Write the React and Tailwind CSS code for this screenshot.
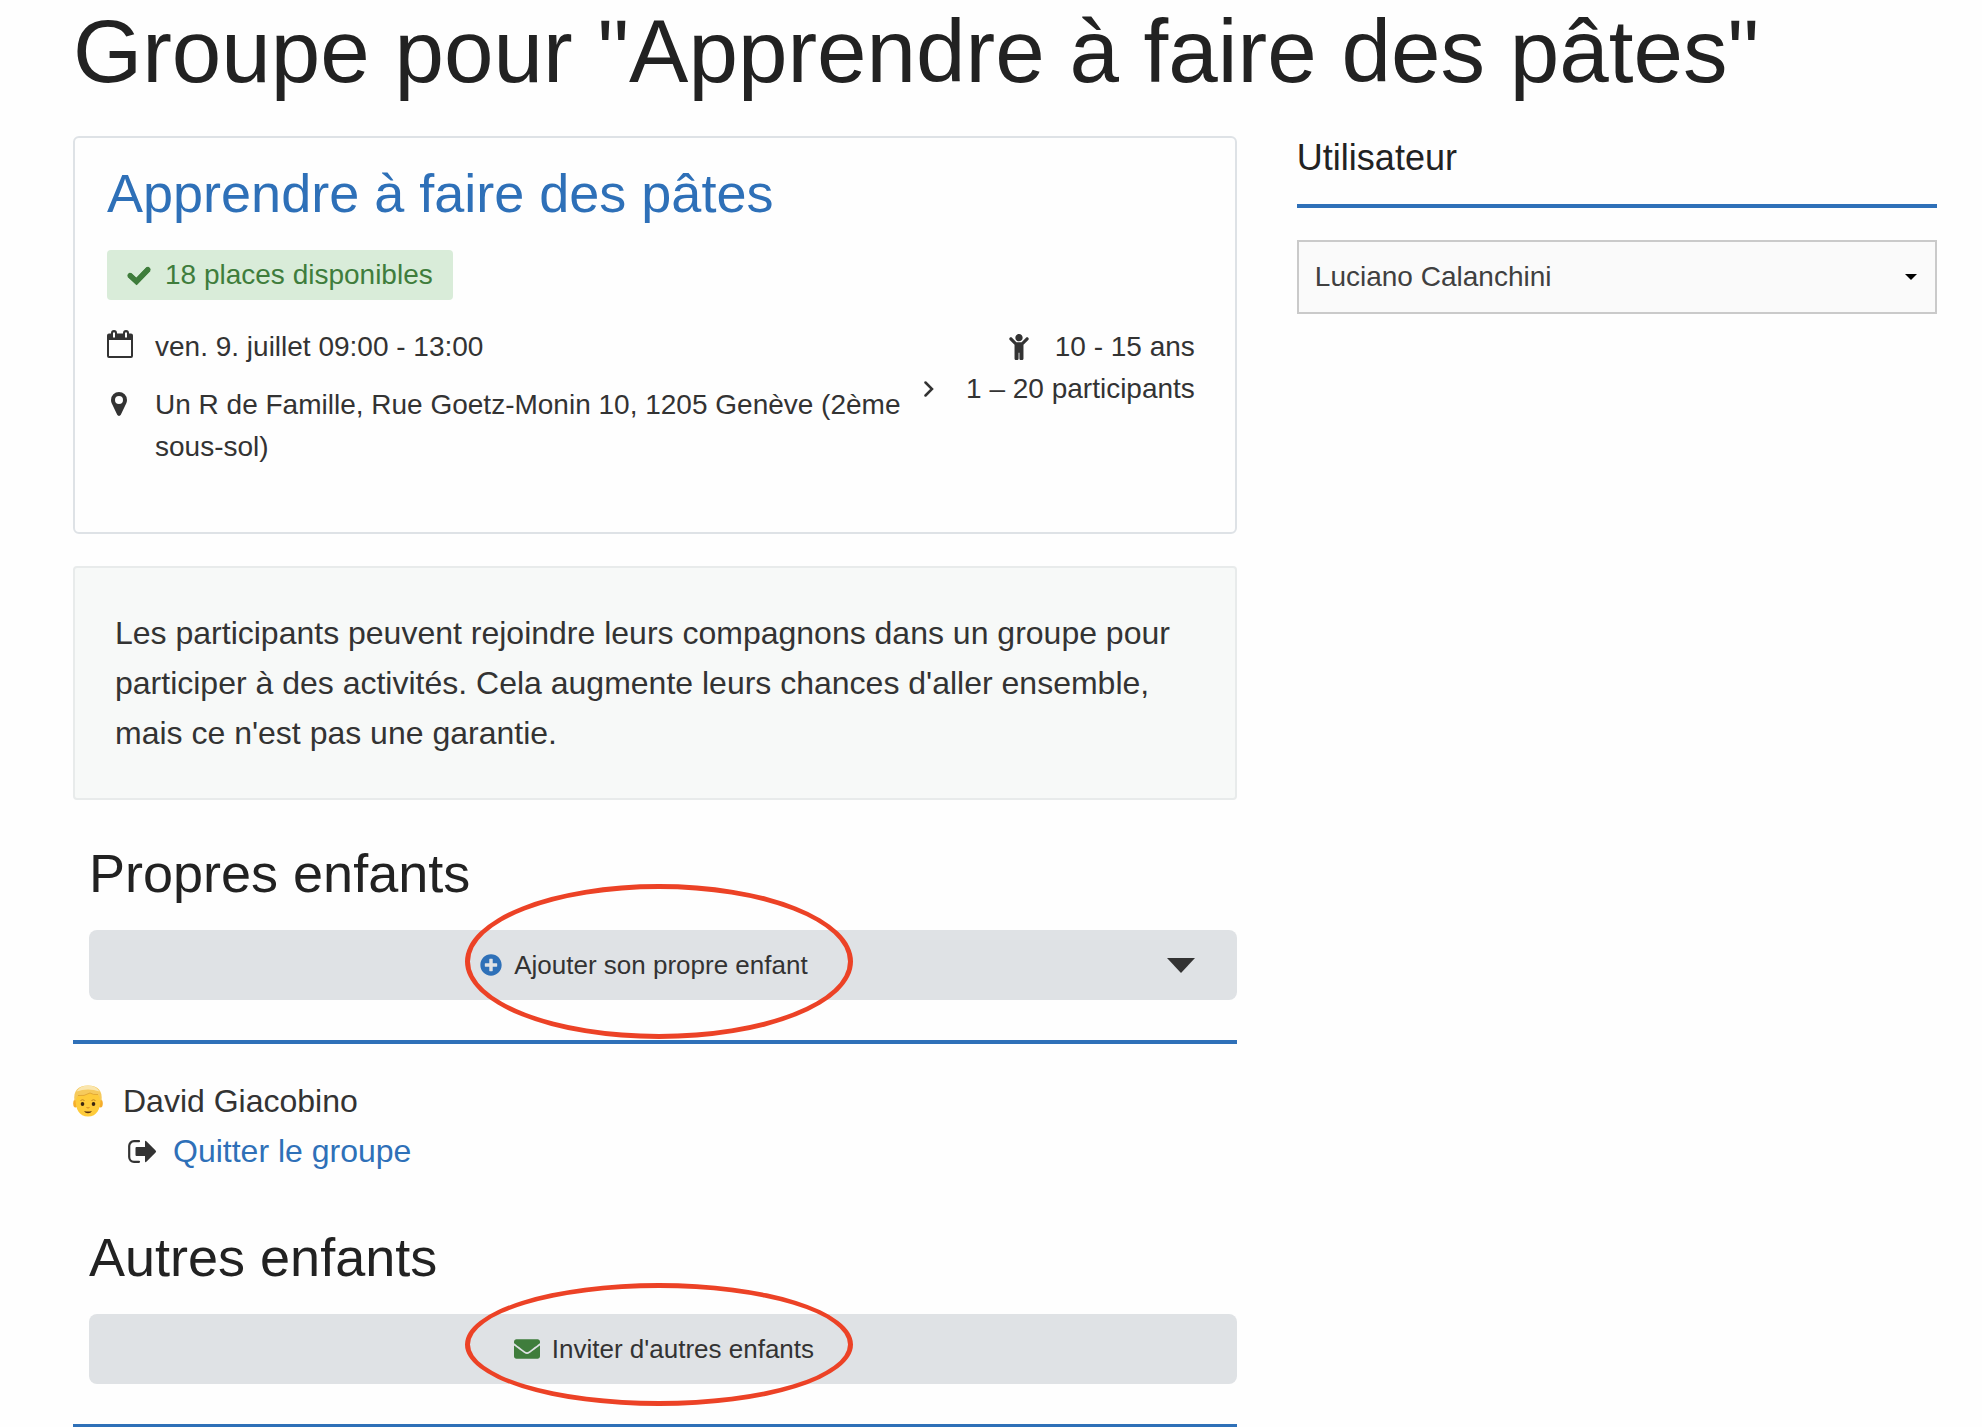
import React, { useState } from 'react';
import { FaChild, FaEnvelope, FaPlusCircle } from 'react-icons/fa';

const CheckIcon = () => (
    <svg className="w-6 h-6" viewBox="0 0 24 24" aria-hidden="true">
        <path d="M2.500 12 9.500 18.500 21.500 6" fill="none" stroke="currentColor" strokeWidth="5.500" />
        <path d="M3 12.500 9.500 18.500 21 6.500" fill="none" stroke="currentColor" strokeWidth="5" strokeLinecap="round" />
    </svg>
);

const CalendarIcon = () => (
    <svg className="w-[26px] h-[28px]" viewBox="0 0 26 28" aria-hidden="true">
        <path
            fill="currentColor"
            fillRule="evenodd"
            d="M2 3.500h2V3a3 3 0 0 1 6 0v.5h6V3a3 3 0 0 1 6 0v.5h2a2 2 0 0 1 2 2V26a2 2 0 0 1-2 2H2a2 2 0 0 1-2-2V5.500a2 2 0 0 1 2-2zM2 10v16h22V10zM6 2.500v5h2v-5zM18 2.500v5h2v-5z"
        />
    </svg>
);

const MarkerIcon = () => (
    <svg className="w-4 h-6" viewBox="0 0 16 24" aria-hidden="true">
        <path
            fill="currentColor"
            fillRule="evenodd"
            d="M8 0a8 8 0 0 1 8 8c0 1.200-.3 2.300-.7 3.200L9.800 22.800a2 2 0 0 1-3.600 0L.7 11.200C.3 10.300 0 9.200 0 8a8 8 0 0 1 8-8zm0 4a4 4 0 1 0 0 8 4 4 0 0 0 0-8z"
        />
    </svg>
);

const LeaveIcon = () => (
    <svg className="w-[29px] h-[23px]" viewBox="0 0 29 23" aria-hidden="true">
        <path d="M11 1.200H6A4.800 4.800 0 0 0 1.200 6v11A4.800 4.800 0 0 0 6 21.800h5" fill="none" stroke="currentColor" strokeWidth="2.200" strokeLinecap="round" />
        <path d="M8.500 7H17V2q0-2 1.600-.6l9 9q1 1.100 0 2.200l-9 9Q17 23 17 21v-5H8.500Q7.500 16 7.500 15V8q0-1 1-1z" fill="currentColor" />
    </svg>
);

const BoyIcon = () => (
    <svg className="w-[30px] h-8" viewBox="0 0 30 32" aria-hidden="true">
        <ellipse cx="2.500" cy="18.500" rx="2.300" ry="4" fill="#f5ad2b" />
        <ellipse cx="27.500" cy="18.500" rx="2.300" ry="4" fill="#f5ad2b" />
        <path d="M2.500 14C2.500 5 8 2 15 2s12.500 3 12.500 12c0 10-3.500 17.500-12.500 17.500S2.500 24 2.500 14z" fill="#fecb3a" />
        <path d="M1.500 16C0 6 5 .5 15 .5S30 6 28.500 16l-1.500-1q-.5-4-2-5.500Q20 10 17 8 11 11.500 5 10.500 3.500 12 3 15z" fill="#f6ca5c" />
        <path d="M3.500 6.500Q7 .5 15 .5t11.500 6Q15 2.500 3.500 6.500z" fill="#fae6ae" />
        <path d="M5 10.500q6 1 12-2.500 3 2 8 1.500" fill="none" stroke="#d99a2b" strokeWidth=".7" />
        <path d="M7.500 15.500q2-1.500 4 0M18.500 15.500q2-1.500 4 0" fill="none" stroke="#b87922" strokeWidth=".8" />
        <ellipse cx="9.500" cy="19" rx="1.800" ry="2" fill="#3d2711" />
        <ellipse cx="20.500" cy="19" rx="1.800" ry="2" fill="#3d2711" />
        <path d="M13.500 22.500q1.500 1 3 0" fill="none" stroke="#d78a1e" />
        <path d="M11 26q4 1 8 0-1.200 2.200-4 2.200T11 26z" fill="#5b3110" />
    </svg>
);

// oval drawn over a button to point it out
const Highlight = ({ className }) => (
    <span className={`absolute left-[376px] w-[388px] rounded-[50%] border-[5px] border-[#ec4226] pointer-events-none ${className}`}></span>
);

const App = () => {
    const [user, setUser] = useState('Luciano Calanchini');

    return (
        <div className="min-h-screen bg-[#fefefe] pl-[73px] pr-[45px] text-[#333] font-['Liberation_Sans',Arial,sans-serif]">
            <h1 className="pt-px text-[89px] leading-[100px] text-[#222]">Groupe pour "Apprendre à faire des pâtes"</h1>

            <div className="mt-[35px] grid grid-cols-[20fr_11fr] items-start gap-[60px]">
                <main>
                    {/* Activity */}
                    <section className="rounded-md border-2 border-[#dee2e6] px-8 pt-5 pb-[64px] text-[28px] leading-[42px]">
                        <h2 className="text-[54px] leading-[70px]">
                            <a href="#activite" className="text-[#2e70b8]">Apprendre à faire des pâtes</a>
                        </h2>
                        <div className="mt-[22px] flex h-[50px] w-fit items-center gap-[14px] rounded-sm bg-[#d9ecd9] px-5 text-[#3f7d3c]">
                            <CheckIcon />
                            <span>18 places disponibles</span>
                        </div>
                        <div className="mt-[26px] flex justify-between pr-2">
                            <div className="flex w-[800px] shrink flex-col gap-4">
                                <div className="flex">
                                    <span className="w-12 shrink-0 pt-1"><CalendarIcon /></span>
                                    <span>ven. 9. juillet 09:00 - 13:00</span>
                                </div>
                                <div className="flex">
                                    <span className="w-12 shrink-0 pl-1 pt-2"><MarkerIcon /></span>
                                    <span>Un R de Famille, Rue Goetz-Monin 10, 1205 Genève (2ème sous-sol)</span>
                                </div>
                            </div>
                            <div className="flex shrink-0 flex-col items-end">
                                <div className="flex items-center gap-6">
                                    <FaChild className="h-[26px] w-[24px]" />
                                    <span>10 - 15 ans</span>
                                </div>
                                <div className="flex items-center gap-8">
                                    <svg className="h-4 w-[10px]" viewBox="0 0 10 16" aria-hidden="true">
                                        <path d="M1.500 1.500 8 8l-6.500 6.500" fill="none" stroke="currentColor" strokeWidth="2.500" strokeLinecap="round" />
                                    </svg>
                                    <span>1 – 20 participants</span>
                                </div>
                            </div>
                        </div>
                    </section>

                    {/* Intro */}
                    <p className="mt-8 rounded-sm border-2 border-[#e8ebeb] bg-[#f7f9f8] px-10 py-[40px] text-[32px] leading-[50px]">
                        Les participants peuvent rejoindre leurs compagnons dans un groupe pour participer à des activités. Cela augmente leurs chances d'aller ensemble, mais ce n'est pas une garantie.
                    </p>

                    {/* Own children */}
                    <section>
                        <h3 className="mt-[38px] pl-4 text-[54px] leading-[70px] text-[#222]">Propres enfants</h3>
                        <div className="relative mt-[22px] ml-4">
                            <button type="button" className="flex h-[70px] w-full items-center rounded-lg bg-[#dfe2e5] px-9 text-[26px]">
                                <span className="flex flex-1 items-center justify-center gap-3 pl-[2px]">
                                    <FaPlusCircle className="h-[22px] w-[22px] text-[#2e70b8]" />
                                    Ajouter son propre enfant
                                </span>
                                <svg className="h-4 w-10" viewBox="0 0 40 16" aria-hidden="true">
                                    <path d="M6 1h28L20 16z" fill="currentColor" />
                                </svg>
                            </button>
                            <Highlight className="-top-[46px] h-[155px]" />
                        </div>
                        <hr className="mt-10 border-t-4 border-[#2e70b8]" />
                        <ul className="mt-8 text-[32px] leading-[50px]">
                            <li>
                                <div className="flex items-center gap-5">
                                    <BoyIcon />
                                    <span>David Giacobino</span>
                                </div>
                                <div className="flex items-center gap-4 pl-[55px]">
                                    <LeaveIcon />
                                    <a href="#quitter" className="text-[#2e70b8]">Quitter le groupe</a>
                                </div>
                            </li>
                        </ul>
                    </section>

                    {/* Other children */}
                    <section>
                        <h3 className="mt-[46px] pl-4 text-[54px] leading-[70px] text-[#222]">Autres enfants</h3>
                        <div className="relative mt-[22px] ml-4">
                            <button type="button" className="flex h-[70px] w-full items-center justify-center gap-3 rounded-lg bg-[#dfe2e5] pl-[2px] text-[26px]">
                                <FaEnvelope className="h-[26px] w-[26px] text-[#3f7d3c]" />
                                Inviter d'autres enfants
                            </button>
                            <Highlight className="-top-[31px] h-[123px]" />
                        </div>
                        <hr className="mt-10 border-t-[3px] border-[#2e70b8]" />
                    </section>
                </main>

                <aside>
                    <label htmlFor="user" className="block border-b-4 border-[#2e70b8] pb-6 text-[36px] leading-[44px] text-[#222]">Utilisateur</label>
                    <div className="relative mt-8">
                        <select
                            id="user"
                            value={user}
                            onChange={(e) => setUser(e.target.value)}
                            className="h-[74px] w-full appearance-none border-2 border-[#cacaca] bg-[#fafafa] px-4 text-[28px] text-[#404040]"
                        >
                            <option>Luciano Calanchini</option>
                        </select>
                        <svg className="pointer-events-none absolute right-5 top-[34px] h-[6px] w-3" viewBox="0 0 12 6" aria-hidden="true">
                            <path d="M0 0h12L6 6z" fill="#000" />
                        </svg>
                    </div>
                </aside>
            </div>
        </div>
    );
};

export default App;
